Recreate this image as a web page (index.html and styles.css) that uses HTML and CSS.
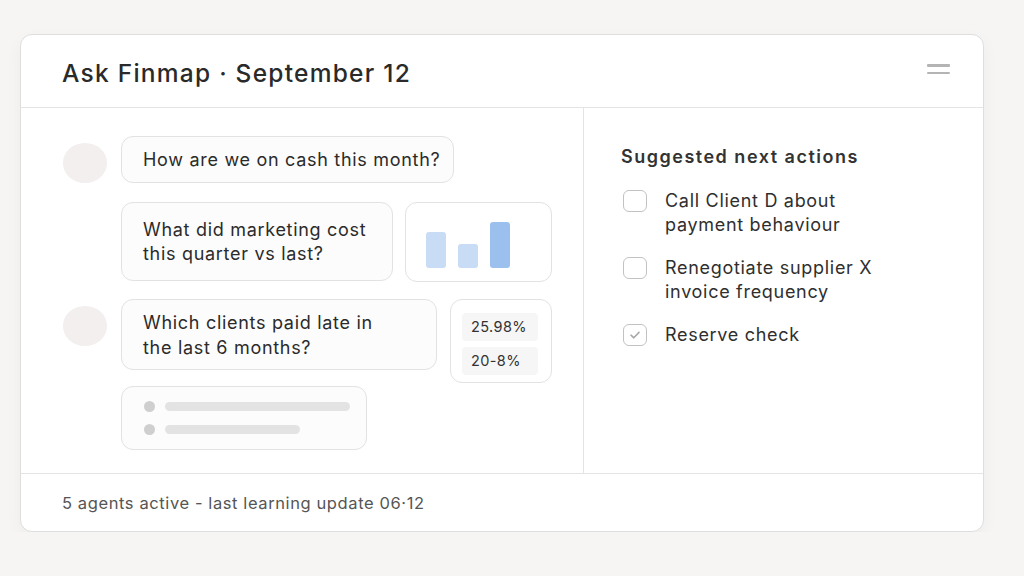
FILE: index.html
```html
<!DOCTYPE html>
<html lang="en">
<head>
    <meta charset="UTF-8">
    <title>Ask Finmap</title>
    <meta name="viewport" content="width=device-width, initial-scale=1.0">
    <link rel="stylesheet" href="styles.css">
</head>
<body>
    <div class="panel">
        <div class="panel-header">
            <h1>Ask Finmap · September 12</h1>
            <div class="menu-icon"><span></span><span></span></div>
        </div>

        <div class="panel-body">
            <!-- 对话区 -->
            <div class="chat">
                <div class="chat-row row-1">
                    <div class="avatar"></div>
                    <div class="bubble bubble-cash">How are we on cash this month?</div>
                </div>
                <div class="chat-row row-2">
                    <div class="avatar-space"></div>
                    <div class="bubble bubble-marketing">What did marketing cost<br>this quarter vs last?</div>
                    <div class="mini-card chart-card">
                        <span class="bar" style="height: 36px"></span>
                        <span class="bar" style="height: 24px"></span>
                        <span class="bar bar-strong" style="height: 46px"></span>
                    </div>
                </div>
                <div class="chat-row row-3">
                    <div class="avatar avatar-low"></div>
                    <div class="bubble bubble-clients">Which clients paid late in<br>the last 6 months?</div>
                    <div class="mini-card pct-card">
                        <div class="pct">25.98%</div>
                        <div class="pct">20-8%</div>
                    </div>
                </div>
                <div class="chat-row row-4">
                    <div class="avatar-space"></div>
                    <div class="bubble skeleton">
                        <div class="skeleton-line"><span class="dot"></span><span class="line" style="width: 185px"></span></div>
                        <div class="skeleton-line"><span class="dot"></span><span class="line" style="width: 135px"></span></div>
                    </div>
                </div>
            </div>

            <!-- 建议操作 -->
            <div class="actions">
                <h2>Suggested next actions</h2>
                <ul class="action-list">
                    <li><span class="checkbox"></span><span>Call Client D about<br>payment behaviour</span></li>
                    <li><span class="checkbox"></span><span>Renegotiate supplier X<br>invoice frequency</span></li>
                    <li><span class="checkbox checked">
                        <svg width="12" height="10" viewBox="0 0 12 10"><path d="M2 5.2 L4.8 7.8 L10 2.4" fill="none" stroke="#a9a9a9" stroke-width="1.6" stroke-linecap="round" stroke-linejoin="round"/></svg>
                    </span><span>Reserve check</span></li>
                </ul>
            </div>
        </div>

        <div class="panel-footer">5 agents active - last learning update 06·12</div>
    </div>
</body>
</html>
```

FILE: styles.css
```css
/* 全局样式 */
body {
    margin: 0;
    background: #f7f5f3;
    font-family: 'Inter', 'Noto Sans', sans-serif;
    color: #2b2b2b;
}
.panel {
    margin: 34px 0 0 20px;
    width: 964px;
    height: 498px;
    box-sizing: border-box;
    background: #fff;
    border: 1px solid #dedede;
    border-radius: 12px;
    box-shadow: 0 6px 18px rgba(0, 0, 0, 0.04);
    display: flex;
    flex-direction: column;
}
.panel-header {
    height: 73px;
    flex: none;
    box-sizing: border-box;
    border-bottom: 1px solid #e4e4e4;
    display: flex;
    align-items: center;
    justify-content: space-between;
    padding: 3px 33px 0 41px;
}
h1 {
    margin: 0;
    font-size: 24.5px;
    font-weight: 500;
    color: #2a2a2a;
    letter-spacing: 1.25px;
}
.menu-icon {
    display: flex;
    flex-direction: column;
    gap: 5px;
    margin-top: -7px;
}
.menu-icon span {
    width: 23px;
    height: 2.5px;
    background: #b4b4b4;
    border-radius: 1px;
}
.panel-body {
    height: 365px;
    flex: none;
    display: flex;
    border-bottom: 1px solid #e4e4e4;
}

/* 对话区 */
.chat {
    width: 563px;
    box-sizing: border-box;
    border-right: 1px solid #e4e4e4;
    padding: 28px 0 0 42px;
}
.chat-row {
    display: flex;
    align-items: flex-start;
}
.row-2 { margin-top: 19px; }
.row-3 { margin-top: 17px; }
.row-4 { margin-top: 3px; }
.avatar {
    width: 44px;
    height: 40px;
    border-radius: 50%;
    background: #f2efee;
    margin: 7px 14px 0 0;
    flex: none;
}
.avatar-low { margin-top: 7px; }
.avatar-space {
    width: 58px;
    flex: none;
}
.bubble {
    box-sizing: border-box;
    background: #fcfcfc;
    border: 1px solid #e2e2e2;
    border-radius: 12px;
    padding: 0 21px;
    display: flex;
    align-items: center;
    font-size: 18px;
    line-height: 24px;
    letter-spacing: 0.7px;
    white-space: nowrap;
    color: #2b2b2b;
}
.bubble-cash { width: 333px; height: 47px; }
.bubble-marketing { width: 272px; height: 79px; }
.bubble-clients { width: 316px; height: 71px; line-height: 25px; }
.mini-card {
    box-sizing: border-box;
    background: #fff;
    border: 1px solid #e2e2e2;
    border-radius: 12px;
    flex: none;
}
.chart-card {
    width: 147px;
    height: 80px;
    margin-left: 12px;
    display: flex;
    align-items: flex-end;
    gap: 12px;
    padding: 0 0 13px 20px;
}
.bar {
    width: 20px;
    border-radius: 3px;
    background: #c8dcf5;
}
.bar-strong { background: #9cc0ee; }
.pct-card {
    width: 102px;
    height: 84px;
    margin-left: 13px;
    padding: 13px 0 0 11px;
}
.pct {
    width: 76px;
    height: 28px;
    background: #f6f6f6;
    border-radius: 4px;
    font-size: 14.5px;
    line-height: 28px;
    letter-spacing: 0.4px;
    padding-left: 9px;
    box-sizing: border-box;
    color: #333;
    margin-bottom: 6px;
}
.skeleton {
    width: 246px;
    height: 64px;
    flex-direction: column;
    align-items: flex-start;
    justify-content: center;
    gap: 12px;
    padding: 0 0 0 22px;
}
.skeleton-line {
    display: flex;
    align-items: center;
    gap: 10px;
}
.dot {
    width: 11px;
    height: 11px;
    border-radius: 50%;
    background: #cfcfcf;
}
.line {
    height: 9px;
    border-radius: 5px;
    background: #e3e3e3;
}

/* 建议操作 */
.actions {
    flex: 1;
    padding: 37px 0 0 37px;
}
h2 {
    margin: 0;
    font-size: 18px;
    font-weight: 600;
    color: #333;
    line-height: 24px;
    letter-spacing: 1.5px;
}
.action-list {
    list-style: none;
    margin: 20px 0 0 0;
    padding: 0;
}
.action-list li {
    display: flex;
    align-items: flex-start;
    gap: 18px;
    font-size: 18px;
    line-height: 24px;
    letter-spacing: 0.7px;
    color: #2f2f2f;
    margin-bottom: 19px;
}
.checkbox {
    width: 24px;
    height: 22px;
    box-sizing: border-box;
    border: 1.5px solid #c2c2c2;
    border-radius: 6px;
    margin: 1px 0 0 2px;
    flex: none;
    display: flex;
    align-items: center;
    justify-content: center;
}
.panel-footer {
    flex: 1;
    display: flex;
    align-items: center;
    padding-left: 41px;
    font-size: 16.5px;
    letter-spacing: 0.6px;
    color: #555;
}
```
